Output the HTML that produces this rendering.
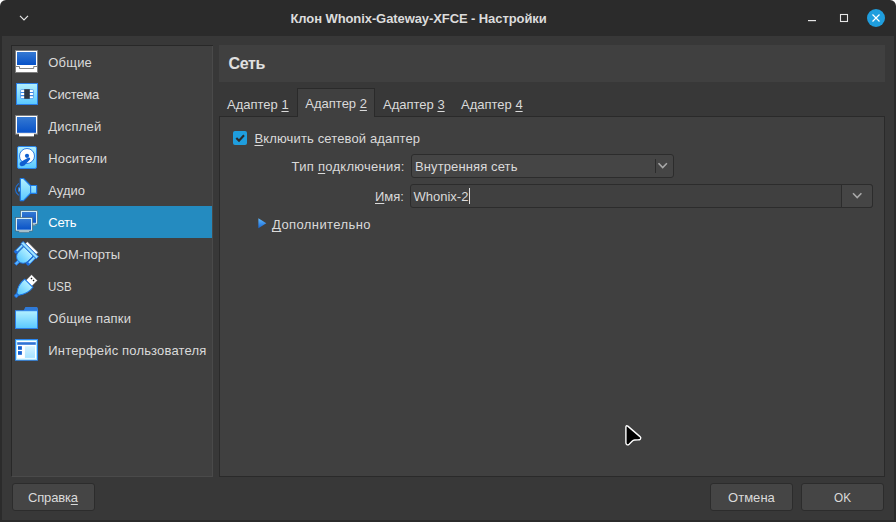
<!DOCTYPE html>
<html lang="ru">
<head>
<meta charset="utf-8">
<title>Клон Whonix-Gateway-XFCE - Настройки</title>
<style>
html,body{margin:0;padding:0;}
body{width:896px;height:522px;overflow:hidden;background:#fff;font-family:"Liberation Sans","DejaVu Sans",sans-serif;font-size:13px;color:#dadada;position:relative;}
#win{position:absolute;left:0;top:0;width:896px;height:522px;background:#2b2b2b;border-radius:6px 6px 0 0;overflow:hidden;}
#body{position:absolute;left:2px;top:36px;width:892px;height:484px;background:#383838;}
#title{position:absolute;left:290.5px;top:11px;font-weight:bold;color:#dcdcdc;}
.t{position:absolute;white-space:nowrap;line-height:16px;height:16px;}
#side{position:absolute;left:11px;top:45px;width:200px;height:430px;background:#404040;border:1px solid #282828;border-right-color:#4a4a4a;border-bottom-color:#4a4a4a;}
.row{position:absolute;left:0;width:200px;height:32px;}
.row.sel{background:#248bc0;color:#fff;}
.row .t{left:36.3px;top:8.5px;}
.row svg{position:absolute;left:3px;top:4px;width:24px;height:24px;overflow:visible;}
#hdr{position:absolute;left:219px;top:45px;width:666px;height:37px;background:#404040;}
#hdr .t{left:9.5px;top:10px;font-size:16px;font-weight:bold;line-height:18px;height:18px;color:#e0e0e0;}
#pane{position:absolute;left:219px;top:116px;width:666px;height:361px;background:#404040;border:1px solid #2a2a2a;box-sizing:border-box;}
.tab{position:absolute;top:89px;height:27px;width:78px;}
.tab .t{left:8px;top:7.5px;}
.tab.sel{background:#404040;border:1px solid #2a2a2a;border-bottom:none;box-sizing:border-box;height:29px;top:88px;}
.tab.sel .t{left:7.3px;top:6.5px;}
u{text-decoration:underline;text-decoration-thickness:1.4px;text-underline-offset:1.5px;text-decoration-skip-ink:none;}
.btn{position:absolute;box-sizing:border-box;background:#454545;border:1px solid #2c2c2c;border-radius:3px;}
#cb{position:absolute;left:233px;top:131px;width:14px;height:14px;border-radius:2px;background:#1f9ede;}
#combo1{position:absolute;left:411px;top:154px;width:263px;height:24px;box-sizing:border-box;background:#454545;border:1px solid #2c2c2c;border-radius:3px;}
#combo2{position:absolute;left:410px;top:184px;width:463px;height:24px;box-sizing:border-box;background:#404040;border:1px solid #2c2c2c;border-radius:3px;}
#combo2b{position:absolute;left:841px;top:184px;width:32px;height:24px;box-sizing:border-box;background:#454545;border:1px solid #2c2c2c;border-radius:0 3px 3px 0;}
svg.ov{position:absolute;left:0;top:0;width:896px;height:522px;pointer-events:none;}
</style>
</head>
<body>

<svg width="0" height="0" style="position:absolute">
<defs>
<linearGradient id="gB" x1="0" y1="0" x2="0" y2="1"><stop offset="0" stop-color="#3579d2"/><stop offset="1" stop-color="#0852c8"/></linearGradient>
<linearGradient id="gL" x1="0" y1="0" x2="0" y2="1"><stop offset="0" stop-color="#b4f0ff"/><stop offset="1" stop-color="#58c8ff"/></linearGradient>
<linearGradient id="gP" x1="0" y1="0" x2="0" y2="1"><stop offset="0" stop-color="#d4f3ff"/><stop offset="1" stop-color="#a6e2ff"/></linearGradient>
<linearGradient id="gT" x1="0" y1="0" x2="0" y2="1"><stop offset="0" stop-color="#62bcff"/><stop offset="1" stop-color="#1767d6"/></linearGradient>
</defs>
</svg>

<div id="win">
  <div id="body"></div>
  <span class="t" id="title" style="letter-spacing:-0.089px;">Клон Whonix-Gateway-XFCE - Настройки</span>
  <div id="side">
<div class="row" style="top:0px"><svg viewBox="0 0 24 24"><rect x="0.5" y="0.5" width="22" height="22" fill="#fff" stroke="#7d7d7d"/>
<rect x="2" y="2" width="19" height="13" fill="url(#gB)"/>
<path d="M1 16.5H4.5V18.5H18.7V16.5H22" fill="none" stroke="#666" stroke-width="0.8"/></svg><span class="t" id="r0" style="letter-spacing:0.200px;">Общие</span></div>
<div class="row" style="top:32px"><svg viewBox="0 0 24 24"><rect x="1.5" y="1.5" width="21" height="21" fill="url(#gL)" stroke="#2a80ea"/>
<rect x="5.6" y="7.6" width="12.8" height="9" rx="1" fill="#fff" stroke="#2a7ae0" stroke-width="0.6"/>
<path d="M5.6 10.5H18.4M5.6 13.6H18.4" stroke="#3a86e6" stroke-width="1.1"/>
<rect x="9.2" y="7.2" width="5.6" height="9.6" fill="#2e3540"/></svg><span class="t" id="r1" style="letter-spacing:-0.233px;">Система</span></div>
<div class="row" style="top:64px"><svg viewBox="0 0 24 24"><rect x="0.5" y="1.5" width="22" height="18.6" fill="#fff" stroke="#7d7d7d"/>
<rect x="3.6" y="20.2" width="15.8" height="2.7" fill="#333"/>
<rect x="4" y="19.4" width="15" height="3" fill="#fff"/>
<rect x="2" y="3" width="19" height="15.8" fill="url(#gB)"/></svg><span class="t" id="r2" style="letter-spacing:0.217px;">Дисплей</span></div>
<div class="row" style="top:96px"><svg viewBox="0 0 24 24"><rect x="2.5" y="0.5" width="19" height="22" rx="1.5" fill="url(#gL)" stroke="#2a84ea"/>
<circle cx="12" cy="10" r="7.5" fill="#fff" stroke="#1f6fdc" stroke-width="0.9"/>
<circle cx="12" cy="9.8" r="2.1" fill="#0f5fd0"/>
<path d="M4.6 18.6Q4.2 16.6 6.4 15.6L13.6 11.6Q15.4 11.4 15.2 13.2L9.4 19.4Q5.6 21.4 4.6 18.6Z" fill="#0f5fd0"/></svg><span class="t" id="r3" style="letter-spacing:0.143px;">Носители</span></div>
<div class="row" style="top:128px"><svg viewBox="0 0 24 24"><path d="M3.8 5.3Q-3 11.4 3.8 17.4" fill="none" stroke="#1c6fd8" stroke-width="1.1"/>
<rect x="3.5" y="9.8" width="1.8" height="3.4" fill="#9fe2ff" stroke="#1e7be6" stroke-width="0.8"/>
<path d="M5.3 0.5H8.5L15.4 7.5H21.6V15.4H15.4L8.5 22.6H5.3Z" fill="url(#gL)" stroke="#1e7be6" stroke-width="1.2" stroke-linejoin="round"/>
<path d="M15.6 7.5V15.4" stroke="#1e7be6" stroke-width="1.2"/></svg><span class="t" id="r4" style="letter-spacing:0.025px;">Аудио</span></div>
<div class="row sel" style="top:160px"><svg viewBox="0 0 24 24"><rect x="17.5" y="13.8" width="3" height="1.6" fill="#d6f0fb" stroke="#555" stroke-width="0.4"/>
<rect x="5.6" y="0.7" width="17" height="13.4" fill="#d6f0fb" stroke="#4a6472" stroke-width="0.7"/>
<rect x="7" y="2" width="14" height="10.8" fill="url(#gB)"/>
<rect x="3.9" y="20.6" width="10.4" height="1.7" fill="#d6f0fb" stroke="#4a6472" stroke-width="0.5"/>
<rect x="0.5" y="7.6" width="17" height="13.4" fill="#d6f0fb" stroke="#4a6472" stroke-width="0.7"/>
<rect x="2" y="9" width="14" height="10.7" fill="url(#gB)"/></svg><span class="t" id="r5" style="letter-spacing:-0.267px;">Сеть</span></div>
<div class="row" style="top:192px"><svg viewBox="0 0 24 24"><g transform="translate(8.1 14.7) rotate(45)">
<rect x="-7.5" y="-13.6" width="15" height="2.8" fill="#fff" stroke="#777" stroke-width="0.5"/>
<rect x="-1.4" y="6" width="2.8" height="4.8" fill="#58b4ff" stroke="#1c70e4" stroke-width="0.9"/>
<rect x="-9.9" y="-8" width="2.6" height="9.4" fill="#8fdcff" stroke="#1c70e4" stroke-width="0.9"/>
<rect x="7.3" y="-8" width="2.6" height="9.4" fill="#8fdcff" stroke="#1c70e4" stroke-width="0.9"/>
<rect x="-10.2" y="0.3" width="3.3" height="2.8" fill="#1c6fe2"/>
<rect x="6.9" y="0.3" width="3.3" height="2.8" fill="#1c6fe2"/>
<path d="M-6.6 -7.7H6.6V0A6.6 6.6 0 0 1 -6.6 0Z" fill="url(#gL)" stroke="#1c70e4" stroke-width="0.9"/>
<rect x="-10.8" y="-10.8" width="21.6" height="3" fill="#9fe4ff" stroke="#1c70e4" stroke-width="0.9"/>
</g></svg><span class="t" id="r6" style="letter-spacing:0.087px;">COM-порты</span></div>
<div class="row" style="top:224px"><svg viewBox="0 0 24 24"><g transform="translate(13.8 9.2) rotate(45)">
<rect x="-4.1" y="-8" width="8.2" height="8.5" fill="#fff" stroke="#666" stroke-width="0.5"/>
<rect x="-2.1" y="-6" width="1.3" height="1.5" fill="#222"/>
<rect x="0.8" y="-6" width="1.3" height="1.5" fill="#222"/>
<circle cx="0" cy="17.6" r="1.7" fill="#3a94f4" stroke="#1c70e4" stroke-width="0.8"/>
<path d="M-5.8 0H5.8C6.6 6 5 11 1.3 15.6H-1.3C-5 11 -6.6 6 -5.8 0Z" fill="url(#gL)" stroke="#1c78e8" stroke-width="1"/>
</g></svg><span class="t" id="r7" style="display:inline-block;transform:scaleX(0.885);transform-origin:0 0;">USB</span></div>
<div class="row" style="top:256px"><svg viewBox="0 0 24 24"><path d="M8.6 4.6L10.4 1H22L23 2.4V5H8.6Z" fill="#2f7ad8"/>
<rect x="0.5" y="4.7" width="22" height="17.8" fill="url(#gL)" stroke="#2a7fe8"/></svg><span class="t" id="r8" style="letter-spacing:0.210px;">Общие папки</span></div>
<div class="row" style="top:288px"><svg viewBox="0 0 24 24"><rect x="0.5" y="1.5" width="22" height="20.7" fill="#fff" stroke="#2a86ee"/>
<rect x="1.5" y="2.5" width="20" height="18.7" fill="none" stroke="#a6e6ff"/>
<rect x="2.2" y="4.2" width="18.6" height="2.6" fill="#2f74d6"/>
<rect x="3" y="8.2" width="3.9" height="3.6" fill="#1260d0"/>
<rect x="3" y="13.1" width="3.9" height="3.7" fill="#1260d0"/>
<rect x="9.9" y="8.2" width="10.1" height="11.7" fill="url(#gP)"/></svg><span class="t" id="r9" style="letter-spacing:0.171px;">Интерфейс пользователя</span></div>
  </div>
  <div style="position:absolute;left:11px;top:45px;width:202px;height:1px;background:#282828"></div>
  <div id="hdr"><span class="t" id="hdrt" style="letter-spacing:-0.400px;">Сеть</span></div>
  <div id="pane"></div>
<div class="tab" style="left:219px"><span class="t" id="tab0" style="">Адаптер <u>1</u></span></div>
<div class="tab sel" style="left:297px"><span class="t" id="tab1" style="">Адаптер <u>2</u></span></div>
<div class="tab" style="left:375px"><span class="t" id="tab2" style="">Адаптер <u>3</u></span></div>
<div class="tab" style="left:453px"><span class="t" id="tab3" style="">Адаптер <u>4</u></span></div>

  <div id="cb"></div>
  <span class="t" id="cbl" style="left:254.5px;top:130.5px;letter-spacing:0.135px;"><u>В</u>ключить сетевой адаптер</span>
  <span class="t" id="l1" style="left:291.5px;top:159px;letter-spacing:0.273px;">Тип <u>п</u>одключения:</span>
  <div id="combo1"></div>
  <span class="t" id="c1t" style="left:415px;top:159px;letter-spacing:0.114px;">Внутренняя сеть</span>
  <span class="t" id="l2" style="left:375px;top:189px;"><u>И</u>мя:</span>
  <div id="combo2"></div><div id="combo2b"></div>
  <span class="t" id="c2t" style="left:413.5px;top:189px;">Whonix-2</span>
  <span class="t" id="adv" style="left:272px;top:216.5px;letter-spacing:0.417px;"><u>Д</u>ополнительно</span>
  <div class="btn" style="left:12px;top:483px;width:83px;height:28px"></div>
  <span class="t" id="b1" style="left:28px;top:490px;letter-spacing:-0.167px;">Справк<u>а</u></span>
  <div class="btn" style="left:710px;top:483px;width:83px;height:28px"></div>
  <span class="t" id="b2" style="left:728px;top:490px;letter-spacing:0.040px;">Отмена</span>
  <div class="btn" style="left:801px;top:483px;width:83px;height:28px"></div>
  <span class="t" id="b3" style="left:834px;top:490px;display:inline-block;transform:scaleX(0.905);transform-origin:0 0;">OK</span>
  <svg class="ov" viewBox="0 0 896 522">
    <!-- titlebar buttons -->
    <path d="M20 15.8L24 19.8L28 15.8" fill="none" stroke="#e6e6e6" stroke-width="1.2"/>
    <rect x="808" y="20" width="8" height="1.2" fill="#e6e6e6"/>
    <rect x="840.5" y="14.5" width="7" height="7" fill="none" stroke="#e6e6e6" stroke-width="1.1"/>
    <circle cx="876" cy="18" r="9" fill="#1f9ede"/>
    <path d="M872.5 14.5L879.5 21.5M879.5 14.5L872.5 21.5" stroke="#fff" stroke-width="1.2"/>
    <!-- checkbox check -->
    <path d="M236.3 138L239 140.8L244 135.3" fill="none" stroke="#2b2b2b" stroke-width="2.1"/>
    <!-- combo1 -->
    <path d="M655.5 159V173" stroke="#2c2c2c" stroke-width="1"/>
    <path d="M658.5 163.3L662.7 167.5L666.9 163.3" fill="none" stroke="#a8a8a8" stroke-width="1.6"/>
    <!-- combo2 -->
    <path d="M853 193.3L857.2 197.5L861.4 193.3" fill="none" stroke="#a8a8a8" stroke-width="1.6"/>
    <!-- text cursor -->
    <rect x="469" y="188" width="1" height="16" fill="#e0e0e0"/>
    <!-- expander arrow -->
    <path d="M258.4 218.2L266.3 223.2L258.4 228.2Z" fill="url(#gT)"/>
    <!-- mouse pointer -->
    <path d="M625.9 427.2Q625.9 425 627.8 426.1L640 436.6Q641.4 438 640.3 439.2Q639.6 439.9 638 439.9L634.6 440Q633.2 440.1 632.1 441.2L629.1 444.2Q628 445.2 626.9 444.7Q625.9 444.2 625.9 442.8Z" fill="#000" stroke="#fff" stroke-width="1.4" stroke-linejoin="round"/>
  </svg>
</div>
</body>
</html>
